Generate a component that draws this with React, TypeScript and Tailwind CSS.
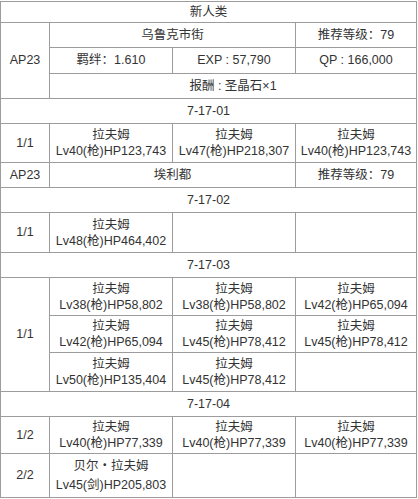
import React from "react";

const B = "border-r border-b border-[#9c9c9c] flex items-center justify-center text-center";

function Cell({ className = "", children }: { className?: string; children?: React.ReactNode }) {
  return <div className={`${B} ${className}`}>{children}</div>;
}

function Enemy({ name = "拉夫姆", info, lh = "leading-[16px]" }: { name?: string; info: string; lh?: string }) {
  return (
    <Cell>
      <div className={lh}>
        <div>{name}</div>
        <div>{info}</div>
      </div>
    </Cell>
  );
}

export default function App() {
  return (
    <div className="w-[418px] h-[499px] bg-white pt-px">
      <div
        className="grid w-[417px] border-l border-t border-[#9c9c9c] text-[12.5px] text-[#333] grid-cols-[49px_123px_123px_121px] grid-rows-[21px_25px_26px_25px_25px_39px_25px_25px_40px_25px_38px_37px_39px_25px_37px_44px]"
        style={{ fontFamily: '"Liberation Sans", "Noto Sans CJK SC", sans-serif' }}
      >
        <Cell className="col-span-4">新人类</Cell>

        <Cell className="row-span-3">AP23</Cell>
        <Cell className="col-span-2">乌鲁克市街</Cell>
        <Cell>推荐等级：79</Cell>
        <Cell>羁绊：1.610</Cell>
        <Cell>EXP : 57,790</Cell>
        <Cell>QP : 166,000</Cell>
        <Cell className="col-span-3">报酬 : 圣晶石×1</Cell>

        <Cell className="col-span-4">7-17-01</Cell>
        <Cell>1/1</Cell>
        <Enemy info="Lv40(枪)HP123,743" />
        <Enemy info="Lv47(枪)HP218,307" />
        <Enemy info="Lv40(枪)HP123,743" />

        <Cell>AP23</Cell>
        <Cell className="col-span-2">埃利都</Cell>
        <Cell>推荐等级：79</Cell>

        <Cell className="col-span-4">7-17-02</Cell>
        <Cell>1/1</Cell>
        <Enemy info="Lv48(枪)HP464,402" />
        <Cell />
        <Cell />

        <Cell className="col-span-4">7-17-03</Cell>
        <Cell className="row-span-3">1/1</Cell>
        <Enemy info="Lv38(枪)HP58,802" />
        <Enemy info="Lv38(枪)HP58,802" />
        <Enemy info="Lv42(枪)HP65,094" />
        <Enemy info="Lv42(枪)HP65,094" />
        <Enemy info="Lv45(枪)HP78,412" />
        <Enemy info="Lv45(枪)HP78,412" />
        <Enemy info="Lv50(枪)HP135,404" />
        <Enemy info="Lv45(枪)HP78,412" />
        <Cell />

        <Cell className="col-span-4">7-17-04</Cell>
        <Cell>1/2</Cell>
        <Enemy info="Lv40(枪)HP77,339" />
        <Enemy info="Lv40(枪)HP77,339" />
        <Enemy info="Lv40(枪)HP77,339" />

        <Cell>2/2</Cell>
        <Enemy name="贝尔・拉夫姆" info="Lv45(剑)HP205,803" lh="leading-[19px]" />
        <Cell />
        <Cell />
      </div>
    </div>
  );
}
